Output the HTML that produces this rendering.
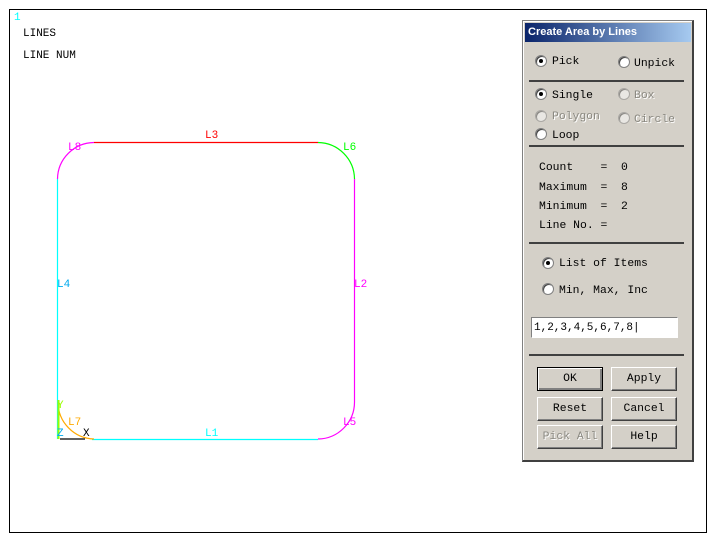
<!DOCTYPE html>
<html><head><style>
body{margin:0;width:720px;height:546px;background:#fff;position:relative;overflow:hidden;font-family:"Liberation Mono",monospace;font-size:11px}
.a{position:absolute;white-space:pre;margin-top:2px}
.dlg .a{font-size:11.4px}
.dlg{position:absolute;left:522px;top:20px;width:169px;height:439px;background:#d4d0c8;border:1px solid #808080;border-right:2px solid #404040;border-bottom:2px solid #404040;box-shadow:inset 1px 1px 0 #fff}
.t{position:absolute;left:2px;top:2px;width:166px;height:19px;background:linear-gradient(90deg,#0a246a,#a6caf0);color:#fff;font:bold 11px "Liberation Sans",sans-serif;line-height:19px;text-indent:3px}
.sep{position:absolute;left:6px;width:155px;height:2px;background:#404040}
.r{position:absolute;width:12px;height:12px;border-radius:50%;background:#fff;border:1px solid #808080;box-sizing:border-box;box-shadow:inset 1px 1px 0 #404040}
.r.on::after{content:"";position:absolute;left:3px;top:3px;width:4px;height:4px;border-radius:50%;background:#000}
.d{color:#8a8880;text-shadow:1px 1px 0 #fff}
.b{position:absolute;width:66px;height:24px;box-sizing:border-box;border:1px solid;border-color:#fff #404040 #404040 #fff;box-shadow:inset -1px -1px 0 #808080;text-align:center;line-height:22px;font-size:11.4px}
</style></head><body>
<div style="position:absolute;left:9px;top:9px;width:696px;height:522px;border:1px solid #000"></div>
<div class="a" style="left:14px;top:10px;color:#0ff;font-size:11px">1</div>
<div class="a" style="left:23px;top:26px">LINES</div>
<div class="a" style="left:23px;top:48px">LINE NUM</div>
<svg style="position:absolute;left:0;top:0" width="720" height="546">
<g fill="none" stroke-width="1.2">
<line x1="94" y1="142.5" x2="318" y2="142.5" stroke="#f00"/>
<path d="M318 142.5 A37 37 0 0 1 354.5 179" stroke="#0f0"/>
<line x1="354.5" y1="179" x2="354.5" y2="402" stroke="#f0f"/>
<path d="M354.5 402 A37 37 0 0 1 318 439" stroke="#f0f"/>
<line x1="92" y1="439.5" x2="318" y2="439.5" stroke="#0ff"/>
<path d="M57.5 179 A37 37 0 0 1 94 142.5" stroke="#f0f"/>
<line x1="57.5" y1="179" x2="57.5" y2="439" stroke="#0ff"/>
<path d="M58 402 A37 37 0 0 0 94 439" stroke="#fa0"/>
<line x1="60" y1="439" x2="85" y2="439" stroke="#000"/>
<line x1="58.5" y1="400" x2="58.5" y2="439" stroke="#9f0" stroke-width="2"/>
</g></svg>
<div class="a" style="left:205px;top:128px;color:#f00">L3</div>
<div class="a" style="left:343px;top:140px;color:#0f0">L6</div>
<div class="a" style="left:68px;top:140px;color:#f0f">L8</div>
<div class="a" style="left:57px;top:277px;color:#0ae">L4</div>
<div class="a" style="left:354px;top:277px;color:#f0f">L2</div>
<div class="a" style="left:343px;top:415px;color:#f0f">L5</div>
<div class="a" style="left:205px;top:426px;color:#0ff">L1</div>
<div class="a" style="left:68px;top:415px;color:#fa0">L7</div>
<div class="a" style="left:57px;top:398px;color:#9f0">Y</div>
<div class="a" style="left:57px;top:426px;color:#0ae">Z</div>
<div class="a" style="left:83px;top:426px;color:#000">X</div>
<div class="dlg">
<div class="t">Create Area by Lines</div>
<div class="r on" style="left:12px;top:34px"></div><div class="a" style="left:29px;top:33px">Pick</div>
<div class="r" style="left:95px;top:35px"></div><div class="a" style="left:111px;top:35px">Unpick</div>
<div class="sep" style="top:59px"></div>
<div class="r on" style="left:12px;top:67px"></div><div class="a" style="left:29px;top:67px">Single</div>
<div class="r" style="left:95px;top:67px;opacity:.5"></div><div class="a d" style="left:111px;top:67px">Box</div>
<div class="r" style="left:12px;top:89px;opacity:.5"></div><div class="a d" style="left:29px;top:88px">Polygon</div>
<div class="r" style="left:95px;top:91px;opacity:.5"></div><div class="a d" style="left:111px;top:91px">Circle</div>
<div class="r" style="left:12px;top:107px"></div><div class="a" style="left:29px;top:107px">Loop</div>
<div class="sep" style="top:124px"></div>
<div class="a" style="left:16px;top:139px">Count    =  0</div>
<div class="a" style="left:16px;top:159px">Maximum  =  8</div>
<div class="a" style="left:16px;top:178px">Minimum  =  2</div>
<div class="a" style="left:16px;top:197px">Line No. =</div>
<div class="sep" style="top:221px"></div>
<div class="r on" style="left:19px;top:236px"></div><div class="a" style="left:36px;top:235px">List of Items</div>
<div class="r" style="left:19px;top:262px"></div><div class="a" style="left:36px;top:262px">Min, Max, Inc</div>
<div style="position:absolute;left:8px;top:296px;width:145px;height:19px;background:#fff;border:1px solid #808080;border-color:#808080 #fff #fff #808080;line-height:20px;text-indent:2px">1,2,3,4,5,6,7,8|</div>
<div class="sep" style="top:333px"></div>
<div class="b" style="left:14px;top:346px;border:1px solid #000;box-shadow:inset 1px 1px 0 #fff,inset -2px -2px 0 #808080">OK</div>
<div class="b" style="left:88px;top:346px">Apply</div>
<div class="b" style="left:14px;top:376px">Reset</div>
<div class="b" style="left:88px;top:376px">Cancel</div>
<div class="b d" style="left:14px;top:404px">Pick All</div>
<div class="b" style="left:88px;top:404px">Help</div>
</div>
</body></html>
